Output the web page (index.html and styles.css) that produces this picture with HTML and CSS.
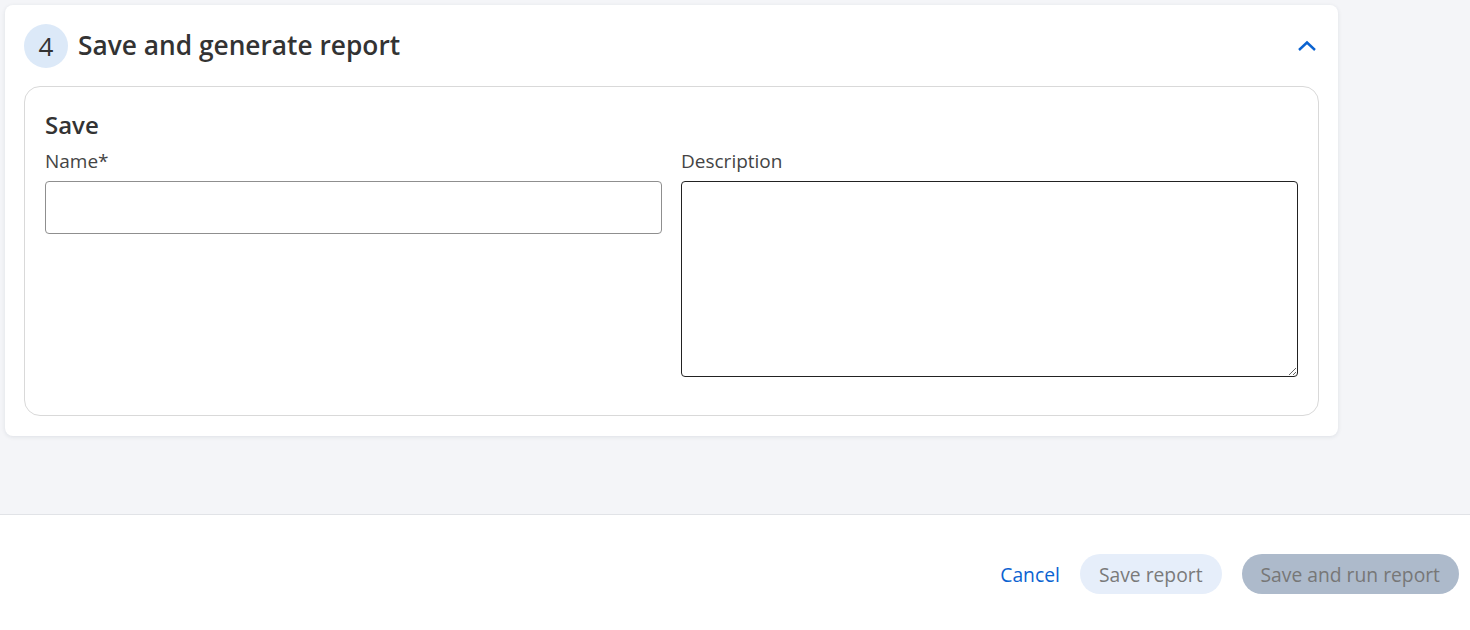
FILE: index.html
```html
<!DOCTYPE html>
<html lang="en">
<head>
<meta charset="utf-8">
<title>Save and generate report</title>
<link rel="stylesheet" href="styles.css">
</head>
<body>
<div class="page">
  <main class="main">
    <section class="card">
      <header class="card-header">
        <span class="step">4</span>
        <h2 class="card-title">Save and generate report</h2>
        <button class="collapse" aria-label="Collapse">
          <svg width="20" height="12" viewBox="0 0 20 12"><path d="M2 10 L10 2.5 L18 10" fill="none" stroke="#0b63d1" stroke-width="2.4"/></svg>
        </button>
      </header>
      <div class="panel">
        <h3 class="panel-title">Save</h3>
        <div class="fields">
          <div class="field">
            <label class="label" for="name">Name*</label>
            <input class="input" id="name" type="text">
          </div>
          <div class="field">
            <label class="label" for="desc">Description</label>
            <textarea class="textarea" id="desc"></textarea>
          </div>
        </div>
      </div>
    </section>
  </main>
  <footer class="footer">
    <button class="btn-link">Cancel</button>
    <button class="btn btn-light">Save report</button>
    <button class="btn btn-dark">Save and run report</button>
  </footer>
</div>
</body>
</html>
```

FILE: styles.css
```css
* { box-sizing: border-box; }
html, body { margin: 0; padding: 0; }
body {
  font-family: "Open Sans", "Noto Sans", "Liberation Sans", sans-serif;
  color: #333;
  background: #f4f5f8;
  width: 1470px;
  height: 630px;
  overflow: hidden;
}
.page { display: flex; flex-direction: column; height: 630px; }
.main { height: 514px; padding: 5px; }
.card {
  width: 1333px;
  background: #fff;
  border-radius: 8px;
  box-shadow: 0 1px 4px rgba(30, 45, 70, 0.10);
  padding: 19px 19px 20px 19px;
}
.card-header { display: flex; align-items: center; height: 44px; }
.step {
  width: 44px; height: 44px; border-radius: 50%;
  background: #dce9f8;
  display: flex; align-items: center; justify-content: center;
  font-size: 26px; color: #333;
}
.card-title {
  margin: -2px 0 0 10px;
  font-size: 26.3px; font-weight: 600; color: #333;
  flex: 1;
}
.collapse {
  border: 0; background: none; padding: 0;
  width: 24px; height: 24px; margin-right: 0;
  display: flex; align-items: center; justify-content: center;
}
.panel {
  margin-top: 18px;
  border: 1px solid #d9d9d9;
  border-radius: 16px;
  padding: 22px 20px 38px 20px;
}
.panel-title { margin: 0; font-size: 24px; font-weight: 600; line-height: 32px; color: #333; }
.fields { display: grid; grid-template-columns: 617px 617px; column-gap: 19px; margin-top: 7px; align-items: start; }
.field { display: flex; flex-direction: column; }
.label { font-size: 19px; line-height: 26px; color: #444; margin-bottom: 7px; }
.input {
  height: 53px; border: 1px solid #8f8f8f; border-radius: 4px;
  font: inherit; padding: 0 12px; background: #fff;
}
.textarea {
  height: 196px; border: 1px solid #222; border-radius: 4px;
  font: inherit; padding: 10px 12px; resize: vertical; background: #fff;
}
.footer {
  flex: 1;
  background: #fff;
  border-top: 1px solid #e1e3e7;
  display: flex; align-items: center; justify-content: flex-end;
  gap: 20px;
  padding: 3px 11px 0 0;
}
.btn-link {
  border: 0; background: none; padding: 0;
  font: inherit; font-size: 19.3px; color: #0b63d1;
}
.btn {
  height: 40px; border: 0; border-radius: 20px;
  font: inherit; font-size: 19.3px; padding: 0 19px; color: #7a7a7a;
}
.btn-light { background: #e6eefa; }
.btn-dark { background: #adbacb; color: #777; }
```
